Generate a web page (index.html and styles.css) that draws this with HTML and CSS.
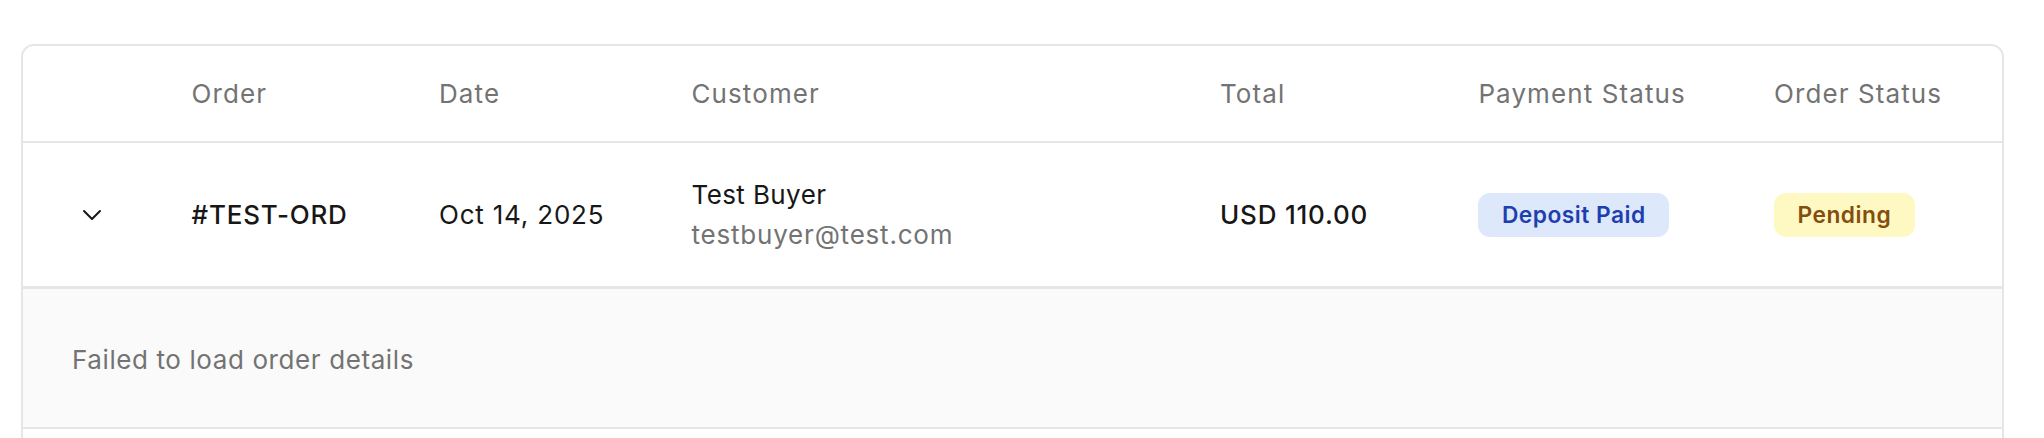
FILE: index.html
```html
<!DOCTYPE html>
<html>
<head>
<meta charset="utf-8">
<link rel="stylesheet" href="styles.css">
</head>
<body>
<div class="page">
  <div class="card">
    <table class="orders">
      <colgroup>
        <col class="c-toggle"><col class="c-order"><col class="c-date"><col class="c-customer"><col class="c-total"><col class="c-pay"><col class="c-status">
      </colgroup>
      <thead>
        <tr>
          <th></th>
          <th>Order</th>
          <th>Date</th>
          <th>Customer</th>
          <th>Total</th>
          <th>Payment Status</th>
          <th>Order Status</th>
        </tr>
      </thead>
      <tbody>
        <tr class="row">
          <td class="toggle"><svg class="chev" viewBox="0 0 24 24" width="32" height="32" fill="none" stroke="currentColor" stroke-width="1.5" stroke-linecap="round" stroke-linejoin="round"><path d="m6 9 6 6 6-6"/></svg></td>
          <td class="strong">#TEST-ORD</td>
          <td>Oct 14, 2025</td>
          <td><div class="name">Test Buyer</div><div class="email">testbuyer@test.com</div></td>
          <td class="strong">USD 110.00</td>
          <td><span class="badge badge-blue">Deposit Paid</span></td>
          <td><span class="badge badge-yellow">Pending</span></td>
        </tr>
        <tr class="detail">
          <td colspan="7">Failed to load order details</td>
        </tr>
        <tr class="spacer">
          <td colspan="7"></td>
        </tr>
      </tbody>
    </table>
  </div>
</div>
</body>
</html>
```

FILE: styles.css
```css
html, body {
  margin: 0;
  background: #ffffff;
}

.page {
  padding: 44px 40px 0 21px;
  font-family: Inter, "Noto Sans", sans-serif;
  color: #171717;
}

.card {
  border: 2px solid #e6e6e6;
  border-radius: 13px;
  overflow: hidden;
  background: #ffffff;
}

.orders {
  width: 100%;
  border-collapse: collapse;
  table-layout: fixed;
}

.c-toggle { width: 142.6px; }
.c-order { width: 247.4px; }
.c-date { width: 252.5px; }
.c-customer { width: 528.5px; }
.c-total { width: 258.4px; }
.c-pay { width: 295.6px; }
.c-status { width: 254px; }

.orders th {
  text-align: left;
  font-weight: 400;
  font-size: 26px;
  line-height: 39px;
  letter-spacing: 1.1px;
  color: #737373;
  padding: 28px 26px 28px;
  border-bottom: 2px solid #e6e6e6;
}

.orders td {
  font-size: 26px;
  line-height: 40px;
  letter-spacing: 0.8px;
  padding: 31.5px 26px;
  vertical-align: middle;
}

.row td {
  border-bottom: 3px solid #e6e6e6;
}

.toggle {
  color: #171717;
}

.orders td.toggle {
  padding-left: 53px;
  padding-right: 0;
}

.chev {
  display: block;
}

.strong {
  font-weight: 500;
}

.name {
  letter-spacing: 0.4px;
}

.email {
  color: #737373;
}

.badge {
  display: inline-block;
  font-size: 22.75px;
  line-height: 28px;
  letter-spacing: 0.5px;
  font-weight: 600;
  padding: 8px 23.5px;
  border-radius: 12px;
}

.badge-blue {
  background: #dde8fb;
  color: #1e40af;
}

.badge-yellow {
  background: #fef9c3;
  color: #854d0e;
}

.orders .detail td {
  background: #fafafa;
  color: #737373;
  letter-spacing: 0.6px;
  padding: 51px 49px 47px;
  border-bottom: 2px solid #e6e6e6;
}

.orders .spacer td {
  padding: 0;
  height: 60px;
}
```
